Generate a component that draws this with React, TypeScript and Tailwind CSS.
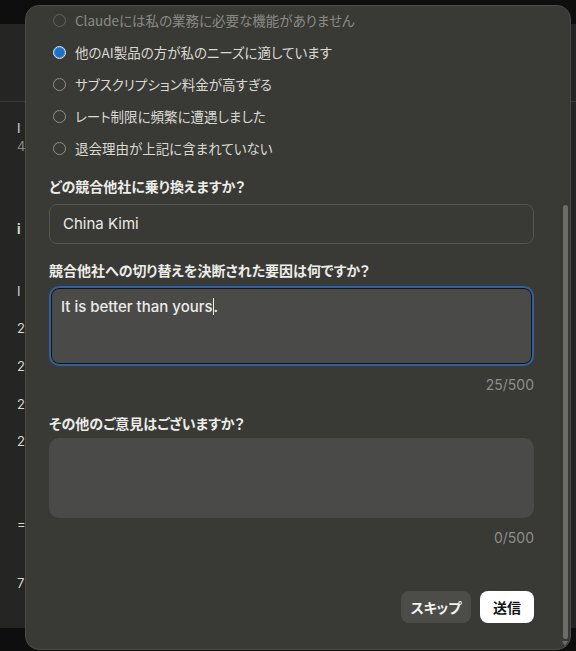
import { ReactNode } from "react"

const reasons = [
  "Claudeには私の業務に必要な機能がありません",
  "他のAI製品の方が私のニーズに適しています",
  "サブスクリプション料金が高すぎる",
  "レート制限に頻繁に遭遇しました",
  "退会理由が上記に含まれていない",
]

const App = () => {
  return (
    <div className="relative w-[576px] h-[651px] overflow-hidden bg-[#0e0e0e] font-['Noto_Sans_CJK_JP',sans-serif]">
      <BackdropPage />
      <FeedbackModal />
    </div>
  )
}

export default App

// settings page that sits dimmed behind the dialog
const BackdropPage = () => {
  return (
    <div className="mt-[24px] h-[604px] bg-[#252523]">
      <div className="h-[78px] border-b border-[#3a3a37]" />
      <div className="w-[25px] flex flex-col pl-[17px] font-['Inter',sans-serif] text-[13px] leading-[18px] text-[#d8d8d3]">
        <span className="mt-[17px]">I</span>
        <span className="text-[#8a8a85]">4</span>
        <span className="mt-[65px] font-bold">i</span>
        <span className="mt-[44px]">I</span>
        <span className="mt-[19px]">2</span>
        <span className="mt-[20px]">2</span>
        <span className="mt-[20px]">2</span>
        <span className="mt-[19px]">2</span>
        <span className="mt-[65px]">=</span>
        <span className="mt-[41px]">7</span>
      </div>
    </div>
  )
}

const FeedbackModal = () => {
  return (
    <div className="absolute left-[25px] top-[5px] w-[546px] h-[645px] rounded-[14px] border border-[#4b4b47] bg-[#393935] overflow-hidden [font-feature-settings:'palt']">
      <div className="flex flex-col pl-[23px] pr-[36px] -mt-[2px]">
        <div className="flex flex-col">
          {reasons.map((r, i) => (
            <RadioRow key={r} label={r} checked={i === 1} faded={i === 0} />
          ))}
        </div>

        <FieldLabel className="mt-[12px] mb-[8px]">どの競合他社に乗り換えますか？</FieldLabel>
        <div className="h-[40px] flex items-center rounded-lg border border-[#55554f] px-[13px] font-['Inter',sans-serif] text-[15px] text-[#ecece8]">
          China Kimi
        </div>

        <FieldLabel className="mt-[16px] mb-[6px]">競合他社への切り替えを決断された要因は何ですか？</FieldLabel>
        <div className="h-[80px] rounded-[10px] border-2 border-[#30609f] bg-[#4a4a49] shadow-[inset_0_0_0_1px_#141414] px-[10px] pt-[8px] font-['Inter',sans-serif] text-[15px] leading-[22px] font-medium text-[#ecece8]">
          It is better than yours
          <span className="inline-block w-px h-[17px] bg-[#ecece8] align-[-3px]" />.
        </div>
        <Counter className="mt-[10px]">25/500</Counter>

        <FieldLabel className="mt-[19px] mb-[5px]">その他のご意見はございますか？</FieldLabel>
        <div className="h-[80px] rounded-[10px] bg-[#4a4a49]" />
        <Counter className="mt-[11px]">0/500</Counter>

        <div className="mt-[44px] flex justify-end gap-[9px]">
          <button className="h-8 w-[70px] rounded-lg bg-[#4c4c49] text-sm font-bold text-[#f2f2ee]">スキップ</button>
          <button className="h-8 w-[54px] rounded-lg bg-white text-sm font-bold text-[#141414]">送信</button>
        </div>
      </div>

      {/* scroll track thumb */}
      <div className="absolute right-[2px] top-[199px] w-[5px] h-[434px] rounded-full bg-[#6c6c68]" />
      <div className="absolute right-[2px] bottom-[3px] w-0 h-0 border-x-[3px] border-x-transparent border-t-[5px] border-t-[#6c6c68]" />
    </div>
  )
}

type RadioRowProps = { label: string; checked?: boolean; faded?: boolean }

const RadioRow = ({ label, checked, faded }: RadioRowProps) => {
  return (
    <div className={`h-8 flex items-center gap-[9px] pl-[4px] ${faded ? "opacity-50" : ""}`}>
      {checked ? (
        <span className="w-[13px] h-[13px] rounded-full border border-[#dfe9f5] bg-[#1f6fc5] shadow-[inset_0_0_0_1px_#3d8ae0]" />
      ) : (
        <span className="w-[13px] h-[13px] rounded-full border-[1.5px] border-[#8e8e89]" />
      )}
      <span className="text-[13.5px] text-[#d9d9d4]">{label}</span>
    </div>
  )
}

const FieldLabel = ({ children, className }: { children: ReactNode; className?: string }) => (
  <div className={`h-5 text-sm leading-5 font-bold text-[#ececE8] ${className ?? ""}`}>{children}</div>
)

const Counter = ({ children, className }: { children: ReactNode; className?: string }) => (
  <div className={`h-[18px] text-right font-['Inter',sans-serif] text-sm leading-[18px] text-[#8e8e89] ${className ?? ""}`}>
    {children}
  </div>
)
